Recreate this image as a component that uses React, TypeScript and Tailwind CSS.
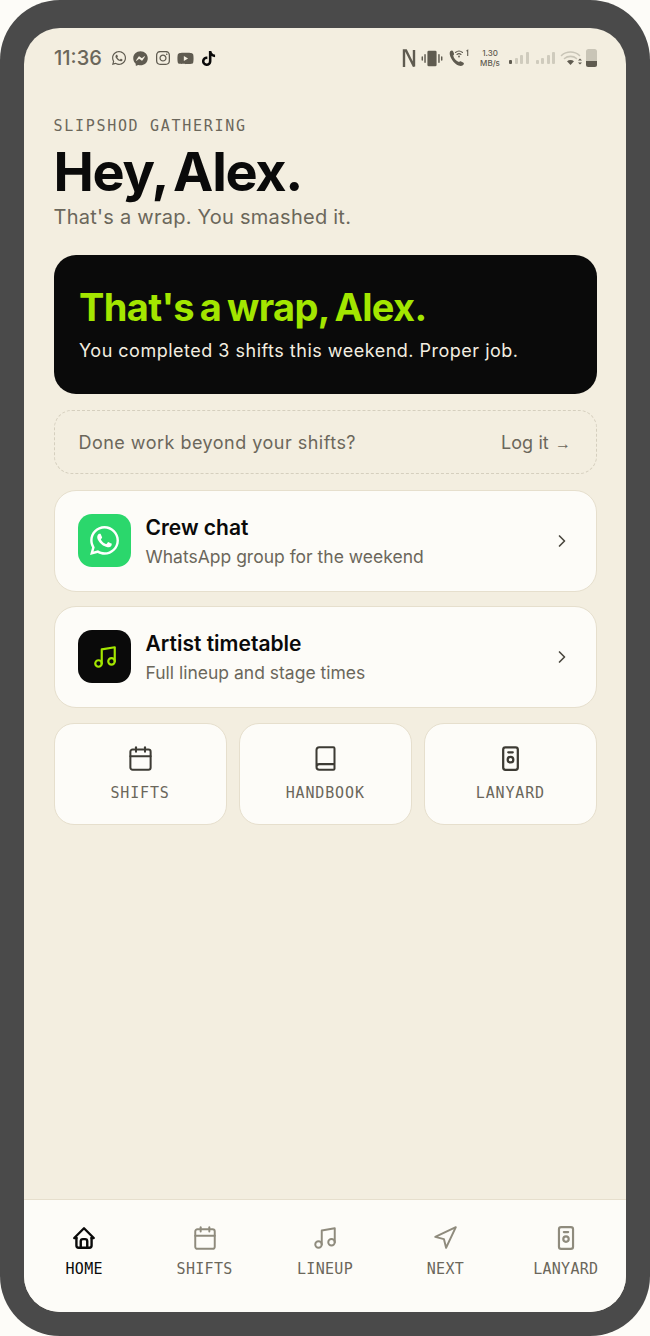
import { Book, Calendar, ChevronRight, Music, Navigation } from "lucide-react";
import { FaFacebookMessenger, FaInstagram, FaTiktok, FaWhatsapp, FaYoutube } from "react-icons/fa";

const sans = "font-['Inter','Noto_Sans',sans-serif]";
const mono = "font-['DejaVu_Sans_Mono','Liberation_Mono',monospace]";

function LanyardIcon({ className }: { className?: string }) {
  return (
    <svg viewBox="0 0 24 24" fill="none" stroke="currentColor" strokeWidth="2" strokeLinecap="round" strokeLinejoin="round" className={className}>
      <rect x="5.500" y="2" width="13" height="20" rx="2" />
      <path d="M10 6.500h4" />
      <circle cx="12" cy="13" r="2.500" />
    </svg>
  );
}

function HomeIcon({ className }: { className?: string }) {
  return (
    <svg viewBox="0 0 24 24" fill="none" stroke="currentColor" strokeWidth="2.200" strokeLinecap="round" strokeLinejoin="round" className={className}>
      <path d="M5 12H3l9-9 9 9h-2" />
      <path d="M5 12v7a2 2 0 0 0 2 2h10a2 2 0 0 0 2-2v-7" />
      <path d="M9 21v-6a2 2 0 0 1 2-2h2a2 2 0 0 1 2 2v6" />
    </svg>
  );
}

function NfcIcon() {
  return (
    <svg viewBox="0 0 14 19" fill="none" stroke="#5f5b50" strokeWidth="2.400" className="h-[19px] w-[14px]">
      <path d="M2 18V1.500h2L12 17.500V1" />
    </svg>
  );
}

function VibrateIcon() {
  return (
    <svg viewBox="0 0 24 18" className="h-[17px] w-[22px]" fill="#5f5b50">
      <rect x="7" y="0.500" width="10" height="17" rx="1.500" />
      <rect x="3.600" y="4" width="1.600" height="10" rx="0.800" />
      <rect x="0.600" y="6.500" width="1.600" height="5" rx="0.800" />
      <rect x="18.800" y="4" width="1.600" height="10" rx="0.800" />
      <rect x="21.800" y="6.500" width="1.600" height="5" rx="0.800" />
    </svg>
  );
}

function CallWifiIcon() {
  return (
    <svg viewBox="0 0 22 18" className="h-[18px] w-[22px]" fill="none">
      <path d="M2 2.500c1.500-1.500 2.500-1.500 3.200 0l.8 2c.3.800 0 1.300-.8 2 .6 3 3 5.600 5.800 6.500.7-.8 1.400-1 2.100-.6l2 1.200c1.200.8 1 1.700-.2 2.600-1.600 1.200-4 .8-6.800-1C4.600 12.500 .5 6.500 2 2.500Z" fill="#5f5b50" />
      <path d="M7.500 3.500c2-1.700 5-1.700 7 0M9 5.500c1.200-1 2.800-1 4 0" stroke="#5f5b50" strokeWidth="1.100" strokeLinecap="round" />
      <circle cx="11" cy="7.500" r="0.900" fill="#5f5b50" />
      <path d="M18.500 2l1.200-.8V7" stroke="#5f5b50" strokeWidth="1.100" />
    </svg>
  );
}

function SignalBars({ active }: { active: number }) {
  const heights = ["h-[4px]", "h-[6px]", "h-[9px]", "h-[12px]"];
  return (
    <div className="flex items-end gap-[2.500px]">
      {heights.map((h, i) => (
        <span key={h} className={`w-[3px] rounded-[1px] ${h} ${i < active ? "bg-[#5f5b50]" : "bg-[#cfcbbd]"}`} />
      ))}
    </div>
  );
}

function WifiIcon() {
  return (
    <svg viewBox="0 0 22 16" className="h-[16px] w-[22px]" fill="none" strokeLinecap="round">
      <path d="M1.500 5.500C6.500 .8 14.500 .8 19.500 5.500" stroke="#c9c5b7" strokeWidth="1.600" />
      <path d="M4.500 8.500C7.700 5.700 13.300 5.700 16.500 8.500" stroke="#c9c5b7" strokeWidth="1.600" />
      <path d="M7 11.200c2.200-1.700 4.800-1.700 7 0L10.500 15Z" fill="#5f5b50" />
      <path d="M18 10.500l2-2 2 2ZM18 12.500l2 2 2-2Z" fill="#5f5b50" />
    </svg>
  );
}

function BatteryIcon() {
  return (
    <div className="flex h-[18px] w-[11px] flex-col overflow-hidden rounded-[2.500px] bg-[#c9c5b7]">
      <div className="flex-1" />
      <div className="h-[6px] bg-[#5f5b50]" />
    </div>
  );
}

function StatusBar() {
  return (
    <div className="flex h-[59px] items-center justify-between pl-[30px] pr-[29px] pt-[1px]">
      <div className="flex items-center">
        <span className={`${sans} text-[20px] font-medium leading-none text-[#6b675b]`}>11:36</span>
        <div className="ml-[9px] flex items-center gap-[6.500px] text-[#5f5b50]">
          <FaWhatsapp className="h-[16px] w-[16px]" />
          <FaFacebookMessenger className="h-[15px] w-[15px]" />
          <FaInstagram className="h-[16px] w-[16px]" />
          <FaYoutube className="h-[17px] w-[17px]" />
          <FaTiktok className="h-[15px] w-[15px] text-[#0a0a0a]" />
        </div>
      </div>
      <div className="flex items-center">
        <NfcIcon />
        <div className="ml-[5px]"><VibrateIcon /></div>
        <div className="ml-[5px]"><CallWifiIcon /></div>
        <div className={`${sans} ml-[8px] w-[24px] text-center text-[8px] font-medium leading-[10px] text-[#5f5b50]`}>
          <div>1.30</div>
          <div>MB/s</div>
        </div>
        <div className="ml-[7px]"><SignalBars active={1} /></div>
        <div className="ml-[7px]"><SignalBars active={0} /></div>
        <div className="ml-[5px]"><WifiIcon /></div>
        <div className="ml-[4px]"><BatteryIcon /></div>
      </div>
    </div>
  );
}

function LinkCard({ icon, title, subtitle }: { icon: React.ReactNode; title: string; subtitle: string }) {
  return (
    <div className="flex h-[101.500px] items-center rounded-[22px] border border-[#e6dfcd] bg-[#fdfcf8] pl-[23.500px] pr-[24px]">
      {icon}
      <div className="ml-[14.500px] min-w-0 flex-1 pt-[2px]">
        <div className="text-[21px] font-semibold leading-[26px] text-[#0a0a0a]">{title}</div>
        <div className="mt-[4px] text-[17.500px] leading-[24px] text-[#6b675b]">{subtitle}</div>
      </div>
      <ChevronRight className="h-[20px] w-[20px] text-[#4a473e]" strokeWidth={2} />
    </div>
  );
}

function Tile({ icon, label }: { icon: React.ReactNode; label: string }) {
  return (
    <div className="flex h-[102px] flex-col items-center rounded-[20px] border border-[#e6dfcd] bg-[#fdfcf8] pt-[21px]">
      {icon}
      <div className={`${mono} mt-[12px] text-[15px] leading-[18px] tracking-[0.850px] text-[#6b675b]`}>{label}</div>
    </div>
  );
}

function TabItem({ icon, label, active }: { icon: React.ReactNode; label: string; active?: boolean }) {
  return (
    <div className={`flex flex-col items-center ${active ? "text-[#0a0a0a]" : "text-[#6b675b]"}`}>
      <div className={active ? "text-[#0a0a0a]" : "text-[#8f8b7d]"}>{icon}</div>
      <div className={`${mono} mt-[9px] text-[15px] leading-[18px] tracking-[0.300px]`}>{label}</div>
    </div>
  );
}

export default function App() {
  const tileIcon = "h-[27px] w-[27px] text-[#3d3b34]";
  const tabIcon = "h-[26px] w-[26px]";

  return (
    <div className={`${sans} h-[1336px] w-[650px] bg-[#fdfcf8]`}>
      <div className="h-full rounded-[60px] bg-[#4a4a4a] px-[24px] pb-[24px] pt-[28px]">
        <div className="flex h-full flex-col overflow-hidden rounded-[36px] bg-[#f3eee0]">
          <StatusBar />

          <div className="flex-1 pl-[29.500px] pr-[29px]">
            <div className={`${mono} mt-[30px] text-[15px] leading-[18px] tracking-[1.700px] text-[#6b675b]`}>SLIPSHOD GATHERING</div>
            <h1 className="mt-[7px] text-[54px] font-bold leading-[60px] tracking-[-1.300px] [word-spacing:-5px] text-[#0a0a0a]">Hey, Alex.</h1>
            <p className="mt-[2px] text-[20px] leading-[26px] tracking-[0.250px] text-[#6b675b]">That's a wrap. You smashed it.</p>

            <div className="mt-[25px] h-[139px] rounded-[22px] bg-[#0a0a0a] pl-[25.500px] pt-[29px]">
              <div className="text-[38px] font-bold leading-[46px] tracking-[-0.650px] [word-spacing:-2.500px] text-[#a3e600]">That's a wrap, Alex.</div>
              <div className="mt-[9px] text-[18px] leading-[24px] tracking-[0.500px] text-[#f3eee0]">You completed 3 shifts this weekend. Proper job.</div>
            </div>

            <div className="mt-[16px] flex h-[64px] items-center justify-between rounded-[18px] border border-dashed border-[#d5cfbe] pl-[24px] pr-[25px] text-[18px] tracking-[0.480px] text-[#6b675b]">
              <span>Done work beyond your shifts?</span>
              <span className="tracking-[0.100px]">
                Log it <span className="ml-[1px] font-['Liberation_Sans',sans-serif] text-[16px] tracking-normal">→</span>
              </span>
            </div>

            <div className="mt-[16px] flex flex-col gap-[14.500px]">
              <LinkCard
                title="Crew chat"
                subtitle="WhatsApp group for the weekend"
                icon={
                  <div className="flex h-[53px] w-[53px] items-center justify-center rounded-[14px] bg-[#2bd76c]">
                    <FaWhatsapp className="h-[33px] w-[33px] text-white" />
                  </div>
                }
              />
              <LinkCard
                title="Artist timetable"
                subtitle="Full lineup and stage times"
                icon={
                  <div className="flex h-[53px] w-[53px] items-center justify-center rounded-[14px] bg-[#0a0a0a]">
                    <Music className="h-[26px] w-[26px] text-[#a3e600]" strokeWidth={2} />
                  </div>
                }
              />
            </div>

            <div className="mt-[15px] grid grid-cols-3 gap-[12px]">
              <Tile label="SHIFTS" icon={<Calendar className={tileIcon} strokeWidth={1.800} />} />
              <Tile label="HANDBOOK" icon={<Book className={tileIcon} strokeWidth={1.800} />} />
              <Tile label="LANYARD" icon={<LanyardIcon className={tileIcon} />} />
            </div>
          </div>

          <div className="grid h-[113px] grid-cols-5 border-t border-[#e6dfcd] bg-[#fdfcf8] pt-[25px]">
            <TabItem active label="HOME" icon={<HomeIcon className={tabIcon} />} />
            <TabItem label="SHIFTS" icon={<Calendar className={tabIcon} strokeWidth={1.800} />} />
            <TabItem label="LINEUP" icon={<Music className={tabIcon} strokeWidth={1.800} />} />
            <TabItem label="NEXT" icon={<Navigation className={tabIcon} strokeWidth={1.800} />} />
            <TabItem label="LANYARD" icon={<LanyardIcon className={tabIcon} />} />
          </div>
        </div>
      </div>
    </div>
  );
}
